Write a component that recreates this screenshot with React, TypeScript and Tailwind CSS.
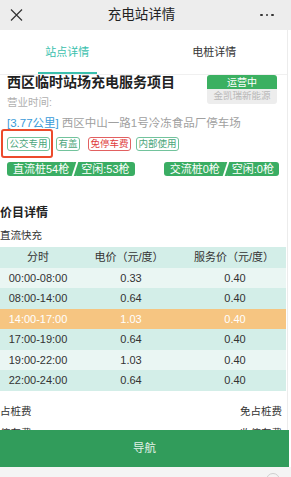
import React from "react";

const rows: { t: string; p: string; s: string; kind: "light" | "mint" | "orange" }[] = [
  { t: "00:00-08:00", p: "0.33", s: "0.40", kind: "light" },
  { t: "08:00-14:00", p: "0.64", s: "0.40", kind: "mint" },
  { t: "14:00-17:00", p: "1.03", s: "0.40", kind: "orange" },
  { t: "17:00-19:00", p: "0.64", s: "0.40", kind: "mint" },
  { t: "19:00-22:00", p: "1.03", s: "0.40", kind: "light" },
  { t: "22:00-24:00", p: "0.64", s: "0.40", kind: "mint" },
];

function rowClass(kind: string) {
  if (kind === "orange") return "bg-[#f6c581] text-white";
  if (kind === "light") return "bg-[#eaf6f3] text-[#333]";
  return "bg-[#d3eee8] text-[#333]";
}

function Pill({ a, b }: { a: string; b: string }) {
  return (
    <div className="flex h-[14px] items-stretch text-[11px] leading-[14px] text-white">
      <div className="flex items-center rounded-l-[3px] bg-[#3aad63] pl-[6px] pr-[4px]">{a}</div>
      <div className="relative w-[4px]">
        <div className="absolute inset-y-0 left-[-2px] w-[8px] -skew-x-[18deg] bg-[#3aad63]" />
        <div className="absolute inset-y-0 left-[1px] w-[2px] -skew-x-[18deg] bg-white" />
      </div>
      <div className="flex items-center rounded-r-[3px] bg-[#3aad63] pl-[4px] pr-[5px]">{b}</div>
    </div>
  );
}

function Tag({ text, red }: { text: string; red?: boolean }) {
  return (
    <div
      className={
        red
          ? "flex h-[14px] items-center rounded-[3px] border border-[#e26060] px-[1.5px] text-[9.5px] leading-none text-[#e03c3c]"
          : "flex h-[14px] items-center rounded-[3px] border border-[#72c39c] px-[1.5px] text-[9.5px] leading-none text-[#4aa57a]"
      }
    >
      {text}
    </div>
  );
}

export default function App() {
  return (
    <div className="flex h-[477px] w-[291px] flex-col overflow-hidden bg-white font-['Liberation_Sans','Noto_Sans_CJK_SC',sans-serif] text-[#333]">
      {/* Header */}
      <div className="grid h-[30px] shrink-0 grid-cols-[48px_1fr_56px] items-center bg-[#ededed]">
        <div className="pl-[10px]">
          <svg width="13" height="12" viewBox="0 0 13 12" fill="none">
            <path d="M1 0.5 L12 11.5 M12 0.5 L1 11.5" stroke="#333" strokeWidth="1.2" />
          </svg>
        </div>
        <div className="text-center text-[13.5px] leading-none text-[#222]">充电站详情</div>
        <div className="flex items-center gap-[3px] pl-[25px]">
          <span className="h-[2.5px] w-[2.5px] rounded-full bg-[#333]" />
          <span className="h-[2.5px] w-[2.5px] rounded-full bg-[#333]" />
          <span className="h-[2.5px] w-[2.5px] rounded-full bg-[#333]" />
        </div>
      </div>

      {/* Scroll content */}
      <div className="relative flex-1 overflow-hidden">
        <div className="w-[288px] border-r border-[#ececec]">
          {/* Tabs */}
          <div className="flex h-[45px] items-stretch border-b border-[#f0f0f0]">
            <div className="relative flex w-[135px] items-center justify-center text-[11px] text-[#3bbfad]">
              站点详情
              <div className="absolute bottom-0 left-[38px] h-[2px] w-[59px] bg-[#3bbfad]" />
            </div>
            <div className="ml-[7px] flex w-[146px] items-center justify-center text-[11px] text-[#333]">
              电桩详情
            </div>
          </div>

          {/* Station info */}
          <div className="relative pl-[7px] pr-[10px]">
            <div className="flex items-start justify-between">
              <div className="flex flex-col">
                <div className="h-[14px] text-[14px] font-bold leading-[14px] text-[#222]">西区临时站场充电服务项目</div>
                <div className="mt-[6px] h-[14px] text-[10.5px] leading-[14px] text-[#b0b0b0]">营业时间:</div>
              </div>
              <div className="flex w-[70px] flex-col overflow-hidden rounded-[3px]">
                <div className="flex h-[14px] items-center justify-center bg-[#3bb061] text-[10px] text-white">运营中</div>
                <div className="flex h-[15px] items-center justify-center bg-[#ededed] text-[9.5px] text-[#b8b8b8]">金凯瑞新能源</div>
              </div>
            </div>
            <div className="mt-[7px] flex h-[14px] items-center text-[11.5px] leading-[14px]">
              <span className="text-[#3a9bd9]">[3.77公里]</span>
              <span className="ml-[3px] text-[#a0a0a0]">西区中山一路1号冷冻食品厂停车场</span>
            </div>
            <div className="relative mt-[7px] flex h-[14px] items-center">
              <Tag text="公交专用" />
              <div className="ml-[6px]"><Tag text="有盖" /></div>
              <div className="ml-[8px]"><Tag text="免停车费" red /></div>
              <div className="ml-[5px]"><Tag text="内部使用" /></div>
              <div className="pointer-events-none absolute left-[-6px] top-[-8px] h-[29px] w-[52px] rounded-[3px] border-2 border-[#ec4a2c]" />
            </div>
            <div className="mt-[11px] flex items-center justify-between pr-0">
              <Pill a="直流桩54枪" b="空闲:53枪" />
              <div className="mr-[-2px]">
                <Pill a="交流桩0枪" b="空闲:0枪" />
              </div>
            </div>
          </div>

          {/* Price details */}
          <div className="mt-[29px] h-[16px] text-[12px] font-bold leading-[16px] text-[#222]">价目详情</div>
          <div className="mt-[7px] h-[14px] text-[10.5px] leading-[14px] text-[#333]">直流快充</div>
          <div className="mt-[5px] w-[286px] text-[11px]">
            <div className="grid h-[20.5px] grid-cols-[76px_106px_1fr] items-center bg-[#d3eee8] text-center text-[#333]">
              <div>分时</div>
              <div>电价（元/度）</div>
              <div>服务价（元/度）</div>
            </div>
            {rows.map((r, i) => (
              <div key={i} className={"grid h-[20.5px] grid-cols-[76px_106px_1fr] items-center text-center " + rowClass(r.kind)}>
                <div>{r.t}</div>
                <div className="pl-[4px]">{r.p}</div>
                <div className="pl-[2px]">{r.s}</div>
              </div>
            ))}
          </div>

          <div className="mt-[14px] flex h-[14px] items-center justify-between pr-[5px] text-[10.5px] text-[#333]">
            <span>占桩费</span>
            <span>免占桩费</span>
          </div>
          <div className="mt-[8px] flex h-[14px] items-center justify-between pr-[5px] text-[10.5px] text-[#333]">
            <span>停车费</span>
            <span>收停车费</span>
          </div>
        </div>
      </div>

      {/* Nav button */}
      <div className="flex h-[37px] w-[289px] shrink-0 items-center justify-center bg-[#319c5b] text-[11.5px] text-[#e2f1e7]">
        导航
      </div>
      {/* Bottom bar */}
      <div className="relative h-[10px] shrink-0 overflow-hidden bg-[#f4f4f4]">
        <div className="absolute left-[266px] top-[6px] h-[14px] w-[14px] rounded-full border border-[#cfcfcf]" />
      </div>
    </div>
  );
}
